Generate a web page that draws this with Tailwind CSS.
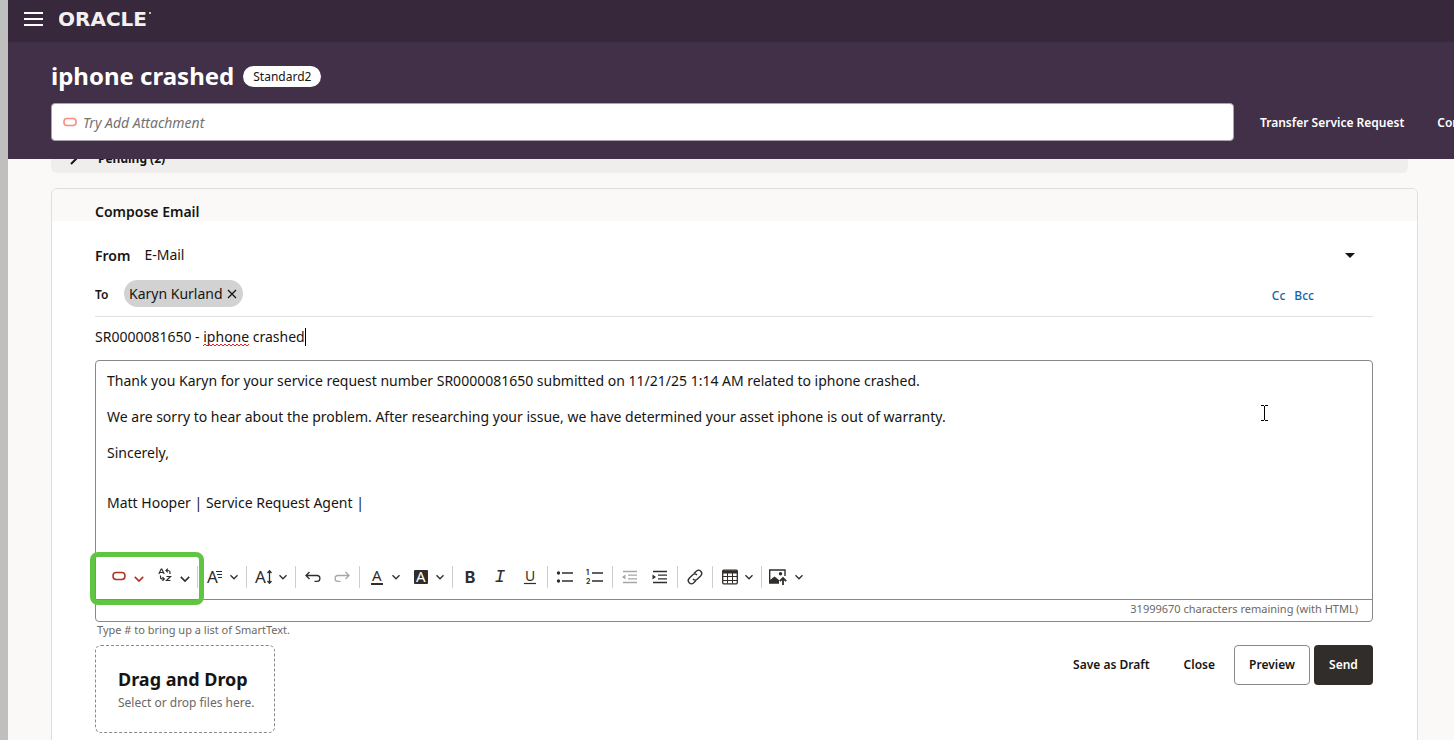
<!DOCTYPE html>
<html lang="en">
  <head>
    <meta charset="UTF-8" />
    <meta name="viewport" content="width=device-width, initial-scale=1.0" />
    <title>iphone crashed - Service Request</title>
    <script src="https://cdn.jsdelivr.net/npm/@tailwindcss/browser@4"></script>
  </head>
  <body class="h-screen overflow-hidden flex bg-[#fbf9f8] font-['Noto_Sans',sans-serif] text-sm text-[#161513]">
    <!-- Shared toolbar chevron -->
    <svg class="hidden">
      <symbol id="chevron" viewBox="0 0 10 10">
        <path d="M1.5 3.2 5 6.8 8.5 3.2" fill="none" stroke="currentColor" stroke-width="1.3" />
      </symbol>
    </svg>

    <div class="w-2 shrink-0 bg-[#bfbfbf]"></div>

    <div class="flex-1 min-w-0 flex flex-col">
      <header class="shrink-0 text-white">
        <div class="h-[42px] flex items-center gap-4 px-4 pb-1 bg-[#37293b]">
          <button aria-label="Menu">
            <svg class="w-[19px] h-[14px]" viewBox="0 0 19 14">
              <path d="M0 1h19M0 7h19M0 13h19" stroke="#fff" stroke-width="2" />
            </svg>
          </button>
          <svg class="w-24 h-7" viewBox="0 0 96 28" role="img" aria-label="Oracle">
            <text x="-1" y="21" font-family="DejaVu Sans" font-size="20" font-weight="700" fill="#f3f0f3">ORACLE</text>
            <circle cx="91" cy="8" r="1" fill="#f3f0f3" />
          </svg>
        </div>

        <div class="h-[117px] pl-[43px] pt-4 bg-[#413048] overflow-hidden">
          <div class="flex items-center gap-[9px] h-9">
            <h1 class="text-2xl leading-9 font-bold whitespace-nowrap">iphone crashed</h1>
            <span class="h-[21px] px-[10px] rounded-full bg-white text-[#161513] text-xs leading-[21px]">Standard2</span>
          </div>
          <div class="flex items-center mt-[9px]">
            <label class="flex-1 flex items-center gap-[6px] h-[38px] px-[11px] bg-white border border-[#aaa5ac] rounded">
              <svg class="w-[14px] h-[10px] shrink-0" viewBox="0 0 14 10">
                <rect x="1" y="1.5" width="12" height="7" rx="3" fill="none" stroke="#f98d7d" stroke-width="1.6" />
              </svg>
              <input type="text" aria-label="Actions" placeholder="Try Add Attachment" class="flex-1 pt-[2px] text-sm italic text-[#161513] placeholder:text-[#757270] outline-none" />
            </label>
            <nav class="w-[220px] shrink-0 pl-[26px] pt-[2px] flex gap-[33px] text-xs font-semibold whitespace-nowrap">
              <button>Transfer Service Request</button>
              <button>Compose Email</button>
            </nav>
          </div>
        </div>
      </header>

      <main class="flex-1 min-h-0 overflow-hidden pl-[43px] pr-9">
        <!-- Row scrolled partly under the header -->
        <button class="-mt-[14px] mr-[10px] h-7 w-[calc(100%-10px)] flex items-center gap-[19px] pl-[18px] rounded-md bg-[#f0eeed] text-xs font-bold">
          <svg class="w-[10px] h-3" viewBox="0 0 10 12">
            <path d="M2 1 7 6 2 11" fill="none" stroke="#161513" stroke-width="2" />
          </svg>
          Pending (2)
        </button>

        <section class="mt-[15px] min-h-full bg-white border border-[#dfdedd] rounded-md overflow-hidden">
          <h2 class="h-8 px-[43px] pt-[13px] bg-[#fbf9f8] leading-5 font-semibold">Compose Email</h2>

          <div class="pl-[43px] pr-11 pt-[19px]">
            <div class="relative flex items-center gap-[14px] h-8">
              <label for="from" class="font-semibold">From</label>
              <select id="from" class="flex-1 appearance-none pb-[2px] outline-none">
                <option>E-Mail</option>
              </select>
              <svg class="absolute right-[18px] top-[13px] w-[10px] h-[5px] pointer-events-none" viewBox="0 0 10 5">
                <path d="M0 0h10L5 5z" fill="#161513" />
              </svg>
            </div>

            <div class="flex items-center mt-[2px] h-[43px] pb-[3px] border-b border-[#e2e0df]">
              <span class="w-[29px] pt-[2px] text-xs font-semibold">To</span>
              <span class="flex items-center gap-1 h-[27px] px-[5px] pr-[6px] rounded-full bg-[#d2d2d2]">
                Karyn Kurland
                <button aria-label="Remove Karyn Kurland">
                  <svg class="w-[10px] h-[10px]" viewBox="0 0 10 10">
                    <path d="M1 1l8 8M9 1 1 9" stroke="#161513" stroke-width="1.3" />
                  </svg>
                </button>
              </span>
              <span class="ml-auto mr-[59px] pt-1 flex gap-[9px] text-xs font-medium text-[#1464a5]">
                <a href="#cc">Cc</a>
                <a href="#bcc">Bcc</a>
              </span>
            </div>

            <div class="relative h-[43px] pt-[10px]">
              <input type="text" aria-label="Subject" value="SR0000081650 - iphone crashed" spellcheck="false" class="block w-full h-5 outline-none" />
              <!-- Spelling mark and caret -->
              <svg class="absolute left-[108px] top-[26px] w-[46px] h-[4px]" viewBox="0 0 46 4">
                <path d="M0 3l2-2 2 2 2-2 2 2 2-2 2 2 2-2 2 2 2-2 2 2 2-2 2 2 2-2 2 2 2-2 2 2 2-2 2 2 2-2 2 2 2-2 2 2 2-2" fill="none" stroke="#e5222a" />
              </svg>
              <span class="absolute left-[210px] top-[11px] w-px h-[18px] bg-black"></span>
            </div>

            <div class="relative border border-[#8b8986] rounded">
              <div contenteditable="true" role="textbox" aria-label="Message" spellcheck="false" class="h-[194px] px-[11px] pt-[11px] leading-[18px] outline-none">
                <p class="mb-[18px]">Thank you Karyn for your service request number SR0000081650 submitted on 11/21/25 1:14 AM related to iphone crashed.</p>
                <p class="mb-[18px]">We are sorry to hear about the problem. After researching your issue, we have determined your asset iphone is out of warranty.</p>
                <p class="mb-8">Sincerely,</p>
                <p>Matt Hooper | Service Request Agent |</p>
              </div>

              <!-- Text pointer -->
              <svg class="absolute right-[104px] top-[44px] w-[7px] h-4" viewBox="0 0 7 16">
                <path d="M0 .5h3M4 .5h3M3.5 1v14M0 15.5h3M4 15.5h3" stroke="#000" />
              </svg>

              <!-- Toolbar -->
              <div class="flex items-center h-[45px] pl-3 border-b border-[#8b8986] text-[#312d2a]">
                <button aria-label="AI Assist" class="flex items-center gap-[7px] w-[50px] h-8 pl-1 text-[#b3311f]">
                  <svg class="w-[14px] h-[10px] mb-[3px]" viewBox="0 0 14 10">
                    <rect x="1" y="1.5" width="12" height="7" rx="3.2" fill="none" stroke="currentColor" stroke-width="1.5" />
                  </svg>
                  <svg class="w-3 h-3 mt-[3px]"><use href="#chevron" /></svg>
                </button>
                <button aria-label="Translate" class="flex items-center gap-[7px] w-[39px] h-8">
                  <svg class="w-[14px] h-[14px] mb-1" viewBox="0 0 14 14" fill="none" stroke="currentColor" stroke-width="1.2">
                    <path d="M.8 6 3.2 1h.6L6.200 6M1.800 4.500h3.400" />
                    <path d="M12 6V4.500a2 2 0 0 0-2-2H8M9.800.7 8 2.500l1.800 1.800M2.500 7.500V9a2 2 0 0 0 2 2H6M4.500 9.200 6.300 11l-1.800 1.800M8.500 8.500h4l-4 4h4" />
                  </svg>
                  <svg class="w-3 h-3 mt-[3px]"><use href="#chevron" /></svg>
                </button>

                <span class="w-px h-[22px] ml-0 mr-[2px] bg-[#cfcdcb]"></span>
                <button aria-label="Paragraph style" class="flex items-center gap-1 w-11 h-8 pl-[5px]">
                  <svg class="w-5 h-5" viewBox="0 0 20 20">
                    <text x="2" y="16" font-family="Noto Sans" font-size="17" fill="currentColor">A</text>
                    <path d="M11 4.500h6M12 7.500h5M13 10.500h4" stroke="currentColor" stroke-width="1.200" />
                  </svg>
                  <svg class="w-[10px] h-[10px]"><use href="#chevron" /></svg>
                </button>

                <span class="w-px h-[22px] mx-[2px] bg-[#cfcdcb]"></span>
                <button aria-label="Font size" class="flex items-center gap-1 w-11 h-8 pl-[5px]">
                  <svg class="w-5 h-5" viewBox="0 0 20 20">
                    <text x="1" y="16" font-family="Noto Sans" font-size="17" fill="currentColor">A</text>
                    <path d="M15.500 4v12M13.500 6l2-2.200 2 2.200M13.500 14l2 2.200 2-2.200" fill="none" stroke="currentColor" stroke-width="1.300" />
                  </svg>
                  <svg class="w-[10px] h-[10px]"><use href="#chevron" /></svg>
                </button>

                <span class="w-px h-[22px] mx-[2px] bg-[#cfcdcb]"></span>
                <button aria-label="Undo" class="flex items-center justify-center w-[29px] h-8">
                  <svg class="w-5 h-5" viewBox="0 0 20 20" fill="none" stroke="currentColor" stroke-width="1.300">
                    <path d="M6.500 5 3 8.500 6.500 12M3 8.500h11a2.900 2.900 0 0 1 0 5.800H11.500" />
                  </svg>
                </button>
                <button aria-label="Redo" disabled class="flex items-center justify-center w-[30px] h-8 text-[#a9a7a5]">
                  <svg class="w-5 h-5" viewBox="0 0 20 20" fill="none" stroke="currentColor" stroke-width="1.300">
                    <path d="M13.500 5 17 8.500 13.500 12M17 8.500h-11a2.900 2.900 0 0 0 0 5.800H8.500" />
                  </svg>
                </button>

                <span class="w-px h-[22px] mx-[2px] bg-[#cfcdcb]"></span>
                <button aria-label="Font color" class="flex items-center gap-1 w-11 h-8 pl-[5px]">
                  <svg class="w-5 h-5" viewBox="0 0 20 20">
                    <text x="5" y="14" font-family="Noto Sans" font-size="15" fill="currentColor">A</text>
                    <path d="M4 17h12" stroke="currentColor" stroke-width="2" />
                  </svg>
                  <svg class="w-[10px] h-[10px]"><use href="#chevron" /></svg>
                </button>
                <button aria-label="Background color" class="flex items-center gap-1 w-11 h-8 pl-[5px]">
                  <svg class="w-5 h-5" viewBox="0 0 20 20">
                    <rect x="3" y="3" width="14" height="14" rx="1" fill="currentColor" />
                    <text x="5" y="15" font-family="Noto Sans" font-size="15" fill="#fff">A</text>
                  </svg>
                  <svg class="w-[10px] h-[10px]"><use href="#chevron" /></svg>
                </button>

                <span class="w-px h-[22px] mx-[2px] bg-[#cfcdcb]"></span>
                <button aria-label="Bold" class="w-[30px] h-8 font-['Inter'] text-base font-bold">B</button>
                <button aria-label="Italic" class="w-[30px] h-8 font-['Liberation_Mono'] text-lg italic">I</button>
                <button aria-label="Underline" class="flex items-center justify-center w-[30px] h-8">
                  <svg class="w-5 h-5" viewBox="0 0 20 20" fill="none" stroke="currentColor">
                    <text x="5" y="14" font-family="Noto Sans" font-size="14" fill="currentColor" stroke="none">U</text>
                    <path d="M4 16.500h12" stroke-width="1.200" />
                  </svg>
                </button>

                <span class="w-px h-[22px] mx-[2px] bg-[#cfcdcb]"></span>
                <button aria-label="Bulleted list" class="flex items-center justify-center w-[30px] h-8">
                  <svg class="w-5 h-5" viewBox="0 0 20 20">
                    <path d="M7 6h11M7 14h11" stroke="currentColor" stroke-width="1.400" />
                    <circle cx="3.500" cy="6" r="1.700" fill="currentColor" />
                    <circle cx="3.500" cy="14" r="1.700" fill="currentColor" />
                  </svg>
                </button>
                <button aria-label="Numbered list" class="flex items-center justify-center w-[30px] h-8">
                  <svg class="w-5 h-5" viewBox="0 0 20 20">
                    <path d="M7 6h11M7 14h11" stroke="currentColor" stroke-width="1.400" />
                    <text x="1" y="8" font-family="Inter" font-size="7" font-weight="700" fill="currentColor">1</text>
                    <text x="1" y="17" font-family="Inter" font-size="7" font-weight="700" fill="currentColor">2</text>
                  </svg>
                </button>

                <span class="w-px h-[22px] mx-[2px] bg-[#cfcdcb]"></span>
                <button aria-label="Decrease indent" disabled class="flex items-center justify-center w-[30px] h-8 text-[#a9a7a5]">
                  <svg class="w-5 h-5" viewBox="0 0 20 20" stroke="currentColor" stroke-width="1.300">
                    <path d="M3 4.500h14M8 8.200h9M8 11.900h9M3 15.500h14" />
                    <path d="M5.500 7.500v5L2 10z" fill="currentColor" stroke="none" />
                  </svg>
                </button>
                <button aria-label="Increase indent" class="flex items-center justify-center w-[30px] h-8">
                  <svg class="w-5 h-5" viewBox="0 0 20 20" stroke="currentColor" stroke-width="1.300">
                    <path d="M3 4.500h14M8 8.200h9M8 11.900h9M3 15.500h14" />
                    <path d="M2.500 7.500v5L6 10z" fill="currentColor" stroke="none" />
                  </svg>
                </button>

                <span class="w-px h-[22px] mx-[2px] bg-[#cfcdcb]"></span>
                <button aria-label="Link" class="flex items-center justify-center w-[30px] h-8">
                  <svg class="w-5 h-5" viewBox="0 0 20 20" fill="none" stroke="currentColor" stroke-width="1.300">
                    <path d="M9 6.500 11.500 4a3.200 3.200 0 0 1 4.500 4.500l-3.500 3.500a3.200 3.200 0 0 1-4.500 0" />
                    <path d="M11 13.500 8.500 16A3.200 3.200 0 0 1 4 11.500L7.500 8a3.200 3.200 0 0 1 4.500 0" />
                  </svg>
                </button>

                <span class="w-px h-[22px] mx-[2px] bg-[#cfcdcb]"></span>
                <button aria-label="Insert table" class="flex items-center gap-1 w-11 h-8 pl-[5px]">
                  <svg class="w-5 h-5" viewBox="0 0 20 20">
                    <rect x="2.700" y="3.200" width="14.600" height="13.600" rx="1" fill="none" stroke="currentColor" stroke-width="1.300" />
                    <path d="M2.500 5h15" stroke="currentColor" stroke-width="3" />
                    <path d="M3 9.500h14M3 13.500h14M7.500 6v10.500M12.500 6v10.500" stroke="currentColor" />
                  </svg>
                  <svg class="w-[10px] h-[10px]"><use href="#chevron" /></svg>
                </button>

                <span class="w-px h-[22px] mx-[2px] bg-[#cfcdcb]"></span>
                <button aria-label="Insert image" class="flex items-center gap-[6px] w-11 h-8 pl-1">
                  <svg class="w-5 h-5 shrink-0" viewBox="0 0 20 20">
                    <path d="M11 16H1.700V3H17v6" fill="none" stroke="currentColor" stroke-width="1.400" />
                    <path d="M2 16v-3l4.500-3.500L11 13v3z" fill="currentColor" />
                    <circle cx="12.500" cy="6.800" r="1.700" fill="currentColor" />
                    <path d="M15 18v-6.500M11.800 14.200 15 11l3.200 3.200" fill="none" stroke="currentColor" stroke-width="1.800" />
                  </svg>
                  <svg class="w-[10px] h-[10px] shrink-0"><use href="#chevron" /></svg>
                </button>
              </div>

              <div class="h-[21px] pr-[14px] text-right text-[11px] leading-[18px] text-[#6b6865]">31999670 characters remaining (with HTML)</div>

              <!-- Highlight around the AI tools -->
              <div class="absolute -left-[6px] top-[191px] w-[114px] h-[53px] border-5 border-[#61c544] rounded-lg pointer-events-none"></div>
            </div>

            <p class="pl-[2px] text-[11px] leading-[15px] text-[#6b6865]">Type # to bring up a list of SmartText.</p>

            <div class="flex items-start justify-between mt-2">
              <button class="w-[180px] h-[88px] pl-[22px] pt-[3px] text-left border border-dashed border-[#8b8986] rounded-md">
                <span class="block text-lg leading-6 font-bold">Drag and Drop</span>
                <span class="block text-xs leading-6 text-[#6b6865]">Select or drop files here.</span>
              </button>
              <div class="flex text-xs font-semibold">
                <button class="h-10 px-[17px]">Save as Draft</button>
                <button class="h-10 px-[17px]">Close</button>
                <button class="h-10 w-[76px] ml-[2px] border border-[#8b8986] rounded">Preview</button>
                <button class="h-10 w-[59px] ml-1 rounded bg-[#312d2a] text-white">Send</button>
              </div>
            </div>
          </div>
        </section>
      </main>
    </div>
  </body>
</html>
